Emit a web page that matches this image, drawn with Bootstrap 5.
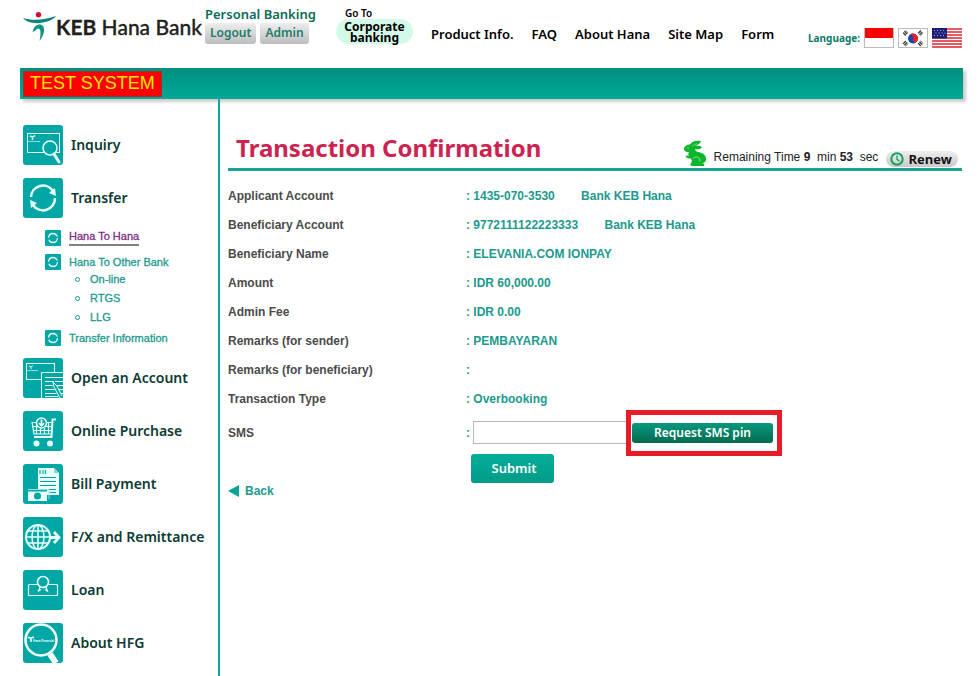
<!DOCTYPE html>
<html lang="en">
<head>
<meta charset="utf-8">
<meta name="viewport" content="width=device-width, initial-scale=1">
<title>KEB Hana Bank - Transaction Confirmation</title>
<link href="https://cdn.jsdelivr.net/npm/bootstrap@5.3.0/dist/css/bootstrap.min.css" rel="stylesheet">
<style>
:root { --teal: #00a7a5; --ink: #0b3b33; --value: #1b9a8d; --hum: "Noto Sans", "Open Sans", sans-serif; }
body { font-family: "Liberation Sans", Arial, sans-serif; font-size: 12px; line-height: 16px; color: #222; background: #fff; }
a { text-decoration: none; color: inherit; }
button { border: 0; }
.page { min-height: 100vh; padding: 0 15px 0 20px; }
.topbar { height: 68px; font-family: var(--hum); }
.brand { flex: none; color: #231f20; width: 185px; padding: 12px 0 0 3px; font-size: 21px; line-height: 30px; font-weight: 500; white-space: nowrap; font-family: Lato, "Open Sans", sans-serif; -webkit-text-stroke: .3px currentColor; }
.brand svg { flex: none; }
.personal { flex: none; width: 131px; padding-top: 5px; }
.personal-title { font-size: 13px; font-weight: 600; line-height: 18px; color: #0a6b58; white-space: nowrap; }
.grey-btn { height: 21px; padding: 0 5px 2px; font-size: 12px; line-height: 18px; font-weight: 600; color: #1c7c69; border-radius: 3px; background: linear-gradient(#eee, #bdbdbd); }
.corp { flex: none; width: 95px; padding-top: 7px; color: #000; }
.corp-go { font-size: 10px; line-height: 12px; font-weight: 600; padding-left: 9px; }
.corp-pill { width: 77px; height: 25px; border-radius: 13px; background: #d3fae9; font-size: 12px; line-height: 11px; font-weight: 700; padding-top: 2px; text-align: center; }
.mainnav { gap: 18px; padding-top: 25px; font-size: 13px; line-height: 18px; font-weight: 600; color: #000; white-space: nowrap; }
.langs { gap: 4px; padding: 28px 1px 0 0; }
.langs-label { font-size: 10px; line-height: 20px; font-weight: 700; color: #0b7a66; }
.langs svg { display: block; }
.greenbar { height: 31px; padding: 3px; background: linear-gradient(#008f7d, #00a998); box-shadow: 3px 3px 3px #ccc; }
.test-tag { height: 26px; padding: 0 6px; font-size: 18px; line-height: 22px; color: #ffe600; background: #f00; border: 1px solid #a0322a; }
.side { width: 200px; flex: none; border-right: 2px solid #0ba79d; padding: 26px 0 13px 3px; }
.menu-link { gap: 8px; height: 40px; margin-bottom: 13px; font-family: var(--hum); font-size: 14px; font-weight: 600; color: var(--ink); white-space: nowrap; }
.menu-link svg, .sub-link svg { flex: none; display: block; }
.menu-link.last-link { margin-bottom: 0; }
.submenu { color: var(--value); padding: 0 0 12px 22px; font-size: 11px; margin-top: -2px; -webkit-text-stroke: .3px currentColor; }
.sub-link { gap: 8px; height: 17px; }
.sub-link.chosen { color: #7c2d86; margin-bottom: 7px; }
.chosen span { border-bottom: 2px solid #857b8a; line-height: 15px; }
.leaves { line-height: 19px; padding-left: 30px; margin-bottom: 2px; }
.leaves li { gap: 10px; }
.dot { width: 5px; height: 5px; border: 1px solid var(--value); border-radius: 50%; }
.content { padding: 0 1px 0 8px; min-width: 0; }
.title-row { height: 72px; border-bottom: 3px solid #15a396; }
.page-title { font-family: var(--hum); font-size: 24px; line-height: 32px; font-weight: 700; color: #cd2350; margin: 0 0 4px 8px; white-space: nowrap; }
.timer { padding-bottom: 1px; white-space: nowrap; }
.timer svg { flex: none; }
.timer-text { padding: 0 8px 0 7px; line-height: 20px; }
.renew { height: 16px; margin-right: 4px; padding: 0 6px 0 4px; gap: 4px; border-radius: 8px; background: linear-gradient(#eee, #c9c9c9); font-family: "Open Sans", sans-serif; font-weight: 700; font-size: 13px; line-height: 16px; color: #111; }
.details { margin-top: 10px; font-weight: 700; color: var(--value); }
.details th, .details td { height: 29px; padding: 0; vertical-align: middle; white-space: nowrap; }
.details th { width: 238px; color: #4b4b4b; }
.details .sms-row th, .details .sms-row td { height: 39px; }
.bank { margin-left: 23px; }
.sms-input { width: 154px; height: 23px; margin-left: 3px; padding: 0 4px; border: 1px solid #b5b9bd; border-right: 0; border-radius: 0; }
.pin-frame { padding: 8px 4px 8px 1px; outline: 5px solid #e81c26; margin-left: 4px; }
.pin-btn { width: 141px; height: 20px; border-radius: 3px; background: linear-gradient(#069a7e, #04694f); color: #fff; font-family: var(--hum); font-size: 12px; line-height: 20px; font-weight: 600; padding: 0; }
.submit-btn { height: 29px; width: 83px; margin: 2px 0 0 243px; border-radius: 3px; background: linear-gradient(#05ad98, #009c88); color: #fff; font-family: var(--hum); font-size: 13px; font-weight: 600; padding: 0 0 1px 3px; }
.back-link { color: var(--value); font-weight: 700; gap: 5px; }
</style>
<script src="https://cdn.jsdelivr.net/npm/bootstrap@5.3.0/dist/js/bootstrap.bundle.min.js"></script>
</head>
<body>
<div class="page d-flex flex-column">
  <header class="topbar d-flex">
    <a href="#" class="brand d-flex">
      <svg width="33" height="30" viewBox="0 0 33 30" aria-hidden="true"><circle cx="15.500" cy="2.700" r="2.700" fill="#d0103a"/><path d="M0 6C9 9 22 8 33 4C30 8 25 9.500 20 10.500C13 12 4 11 0 6Z" fill="#0a8577"/><path d="M9.500 20C11 14 14 12 17.500 12.500C23 14 22 22 16.500 29C18 22 18 17 15.500 16.500C13.500 16.500 13 19 9.500 20Z" fill="#0a9585"/></svg>
      <span><b>KEB</b> Hana Bank</span>
    </a>
    <div class="personal">
      <div class="personal-title">Personal Banking</div>
      <div class="d-flex gap-1">
        <button type="button" class="grey-btn">Logout</button>
        <button type="button" class="grey-btn">Admin</button>
      </div>
    </div>
    <a href="#" class="corp d-block">
      <div class="corp-go">Go To</div>
      <div class="corp-pill">Corporate<br>banking</div>
    </a>
    <nav class="mainnav d-flex align-items-start" aria-label="Main">
      <a href="#">Product Info.</a><a href="#">FAQ</a><a href="#">About Hana</a><a href="#">Site Map</a><a href="#">Form</a>
    </nav>
    <div class="langs d-flex align-items-start ms-auto">
      <span class="langs-label">Language:</span>
      <a href="#" aria-label="Indonesian"><svg width="30" height="20" viewBox="0 0 30 20"><rect x=".5" y=".5" width="29" height="19" fill="#fff" stroke="#bbb"/><rect x="1" y="0" width="28" height="10" fill="#fd0000"/></svg></a>
      <a href="#" aria-label="Korean"><svg width="30" height="20" viewBox="0 0 30 20"><rect x=".5" y=".5" width="29" height="19" fill="#fff" stroke="#bbb"/><g transform="rotate(25 15 10.500)"><circle cx="15" cy="10.500" r="5" fill="#124aa8"/><path d="M10 10.500A5 5 0 0 1 20 10.500A2.500 2.500 0 0 1 15 10.500A2.500 2.500 0 0 0 10 10.500Z" fill="#f01a28"/></g><g stroke="#333" stroke-width="4" stroke-dasharray="1.300 .6"><path d="M6 6.500L9 3.500M21 17L24 14M6 14L9 17M21 3.500L24 6.500"/></g></svg></a>
      <a href="#" aria-label="English"><svg width="30" height="20" viewBox="0 0 30 20"><rect width="30" height="20" fill="#fff"/><path d="M0 1H30M0 4H30M0 7H30M0 10H30M0 13H30M0 16H30M0 19H30" stroke="#e0242f" stroke-width="1.700"/><rect width="15" height="10.500" fill="#1b1f7c"/><path d="M2 2.500H14M3.500 5H14M2 7.500H14" stroke="#aab" stroke-dasharray="1 2"/></svg></a>
    </div>
  </header>
  <div class="greenbar d-flex"><div class="test-tag">TEST SYSTEM</div></div>
  <div class="d-flex flex-grow-1">
    <aside class="side">
      <nav aria-label="Services">
        <a href="#" class="menu-link d-flex align-items-center">
          <svg width="40" height="40" viewBox="0 0 40 40" fill="none" stroke="#e9ffff"><rect width="40" height="40" rx="3" fill="#00a7a5" stroke="none"/><rect x="4.500" y="8.500" width="32" height="19"/><path d="M5 16.500H17" opacity=".6"/><path d="M7 11C9 12 11 11.500 12 10.500M9.500 12V15" stroke-width="1.500"/><circle cx="27" cy="23" r="7" fill="#00a7a5" stroke-width="1.500"/><path d="M31 29L36 37" stroke-width="3" stroke-linecap="round"/></svg>Inquiry</a>
        <a href="#" class="menu-link d-flex align-items-center">
          <svg width="40" height="40" viewBox="0 0 40 40" fill="none" stroke="#e9ffff" stroke-width="2.500"><rect width="40" height="40" rx="3" fill="#00a7a5" stroke="none"/><path d="M8 19A12 12 0 0 1 30 13M32 20A12 12 0 0 1 10 27"/><path d="M26 15L33 18L32 10ZM14 25L7 22L8 30Z" fill="#e9ffff" stroke="none"/></svg>Transfer</a>
        <div class="submenu">
          <a href="#" class="sub-link chosen d-flex align-items-center"><svg width="16" height="16" viewBox="0 0 16 16"><rect width="16" height="16" rx="1" fill="#00a7a5"/><circle cx="8" cy="8" r="4.500" fill="none" stroke="#e9ffff" stroke-width="1.300" stroke-dasharray="12 2.140"/></svg><span>Hana To Hana</span></a>
          <a href="#" class="sub-link d-flex align-items-center"><svg width="16" height="16" viewBox="0 0 16 16"><rect width="16" height="16" rx="1" fill="#00a7a5"/><circle cx="8" cy="8" r="4.500" fill="none" stroke="#e9ffff" stroke-width="1.300" stroke-dasharray="12 2.140"/></svg><span>Hana To Other Bank</span></a>
          <ul class="leaves list-unstyled">
            <li class="d-flex align-items-center"><i class="dot"></i><a href="#">On-line</a></li>
            <li class="d-flex align-items-center"><i class="dot"></i><a href="#">RTGS</a></li>
            <li class="d-flex align-items-center"><i class="dot"></i><a href="#">LLG</a></li>
          </ul>
          <a href="#" class="sub-link d-flex align-items-center"><svg width="16" height="16" viewBox="0 0 16 16"><rect width="16" height="16" rx="1" fill="#00a7a5"/><circle cx="8" cy="8" r="4.500" fill="none" stroke="#e9ffff" stroke-width="1.300" stroke-dasharray="12 2.140"/></svg><span>Transfer Information</span></a>
        </div>
        <a href="#" class="menu-link d-flex align-items-center">
          <svg width="40" height="40" viewBox="0 0 40 40" fill="none" stroke="#e9ffff"><rect width="40" height="40" rx="3" fill="#00a7a5" stroke="none"/><rect x="3.500" y="5.500" width="28" height="16"/><path d="M4 12.500H15" opacity=".6"/><path d="M6 8C8 9 9 8.500 10 7.500M8 9V11"/><path d="M18.500 40V14.500H40V40Z" fill="#00a7a5" stroke="none"/><path d="M18.500 40V14.500H40M22 19.500H40M22 23.500H40M22 27.500H40M22 31.500H40M22 35.500H40M22 38.500H36"/><path d="M30 24L38 40" stroke="#00a7a5" stroke-width="4"/><path d="M30 24L31 29L37 40M30 24L34 28L39 38"/></svg>Open an Account</a>
        <a href="#" class="menu-link d-flex align-items-center">
          <svg width="40" height="40" viewBox="0 0 40 40" fill="none" stroke="#e9ffff"><rect width="40" height="40" rx="3" fill="#00a7a5" stroke="none"/><path d="M9 11.500H28M9 11L11 23H28M10 15.500H28M11 19.500H28M13.500 11V23M17.500 17V23M21.500 17V23M25.500 11V23" stroke-width="1.200"/><path d="M33 8.500H29.500L28.500 26H11" stroke-width="2"/><circle cx="18.500" cy="12" r="5" fill="#00a7a5" stroke-width="1.500"/><path d="M18.500 8.500V14M16 12L18.500 15L21 12" stroke-width="1.700"/><circle cx="13.500" cy="32.500" r="3" fill="#e9ffff" stroke="none"/><circle cx="27" cy="32.500" r="3" fill="#e9ffff" stroke="none"/></svg>Online Purchase</a>
        <a href="#" class="menu-link d-flex align-items-center">
          <svg width="40" height="40" viewBox="0 0 40 40"><rect width="40" height="40" rx="3" fill="#00a7a5"/><path d="M15 4H31L36 9V31H15Z" fill="#e9ffff"/><path d="M31 4V9H36" fill="#8cd8d6"/><path d="M17 6V10M20 6V10M22.500 6V10M17 13.500H33M17 17.500H33M17 21.500H33M25 25.500H33M27 28.500H33" stroke="#00a7a5" stroke-width="1.200"/><path d="M4 25H24V37H4Z" fill="#00a7a5"/><path d="M5 27.500H24V37H5Z" fill="#e9ffff"/><path d="M5 25.500H26V35" fill="none" stroke="#9edfdd"/><circle cx="14.500" cy="32" r="3.500" fill="#00a7a5"/></svg>Bill Payment</a>
        <a href="#" class="menu-link d-flex align-items-center">
          <svg width="40" height="40" viewBox="0 0 40 40" fill="none" stroke="#e9ffff" stroke-width="1.500"><rect width="40" height="40" rx="3" fill="#00a7a5" stroke="none"/><circle cx="15" cy="20" r="12" stroke-width="2"/><ellipse cx="15" cy="20" rx="6" ry="12"/><path d="M15 8V32M3 20H27M5 14H25M5 26H25"/><path d="M27 20.500H35M31 15L36 20.500L31 26" stroke-width="2.800"/></svg>F/X and Remittance</a>
        <a href="#" class="menu-link d-flex align-items-center">
          <svg width="40" height="40" viewBox="0 0 40 40" fill="none" stroke="#e9ffff" stroke-width="1.200"><rect width="40" height="40" rx="3" fill="#00a7a5" stroke="none"/><rect x="5.500" y="14.500" width="29" height="11" rx="1"/><circle cx="20" cy="12" r="5.500" fill="#00a7a5" stroke-width="1.600"/><path d="M17 17L15.500 21L18 19.500M23 17L24.500 21L22 19.500"/></svg>Loan</a>
        <a href="#" class="menu-link last-link d-flex align-items-center">
          <svg width="40" height="40" viewBox="0 0 40 40" fill="none" stroke="#f3ffff"><rect width="40" height="40" rx="3" fill="#00a7a5" stroke="none"/><circle cx="18" cy="17" r="15.500" stroke-width="2.500"/><path d="M27 31L33 40" stroke-width="6"/><path d="M5 14C7 16 9 15 11 14M8 15V19" stroke-width="1.500"/><text x="10" y="19" font-family="Liberation Sans, sans-serif" font-size="3" font-weight="700" fill="#f3ffff" stroke="none">Hana Financial</text></svg>About HFG</a>
      </nav>
    </aside>
    <main class="content flex-grow-1">
      <div class="title-row d-flex align-items-end justify-content-between">
        <h1 class="page-title">Transaction Confirmation</h1>
        <div class="timer d-flex align-items-end">
          <svg width="23" height="27" viewBox="0 0 23 27" fill="#0db52c" aria-hidden="true"><path d="M17 1C12 0 8 1 6 4.500C3 4.500 0 6.500 0 9C0 11.500 3 12 5 12C4 14 4 15 5 16L2 15.500C1 17 3 18.500 7 18.500L8 21L6.500 24C6 26 8 26 10 26H20C21 24.500 20 23.500 18 23C21 23 22.500 21 22 18C21.500 14.500 18 12.500 12.500 11.500C11.500 11 11.500 10 11 9C13 10 17 9.500 18 7C16 5.500 13 5.500 11 6C14 5 16.500 3 17 1Z"/><path d="M9 18.500C12 15.500 16.500 17 16 21.500" fill="none" stroke="#a8eab4" stroke-width=".8"/><path d="M8.500 6L13 3.500" stroke="#a8eab4" stroke-width=".6"/><circle cx="4" cy="8" r=".6" fill="#fff"/></svg>
          <span class="timer-text">Remaining Time <b>9</b>&nbsp; min <b>53</b>&nbsp; sec</span>
          <button type="button" class="renew d-flex align-items-center"><svg width="14" height="14" viewBox="0 0 14 14" fill="none" stroke="#12a05c"><circle cx="7" cy="7" r="5.700" stroke-width="2"/><path d="M7 3.500V7.500L9.500 9" stroke-width="1.300"/></svg>Renew</button>
        </div>
      </div>
      <form>
        <table class="details">
          <tbody>
            <tr><th scope="row">Applicant Account</th><td>: 1435-070-3530 <span class="bank">Bank KEB Hana</span></td></tr>
            <tr><th scope="row">Beneficiary Account</th><td>: 9772111122223333 <span class="bank">Bank KEB Hana</span></td></tr>
            <tr><th scope="row">Beneficiary Name</th><td>: ELEVANIA.COM IONPAY</td></tr>
            <tr><th scope="row">Amount</th><td>: IDR 60,000.00</td></tr>
            <tr><th scope="row">Admin Fee</th><td>: IDR 0.00</td></tr>
            <tr><th scope="row">Remarks (for sender)</th><td>: PEMBAYARAN</td></tr>
            <tr><th scope="row">Remarks (for beneficiary)</th><td>:</td></tr>
            <tr><th scope="row">Transaction Type</th><td>: Overbooking</td></tr>
            <tr class="sms-row"><th scope="row"><label for="sms">SMS</label></th><td>
              <div class="d-flex align-items-center">:<input id="sms" type="text" class="sms-input"><div class="pin-frame d-flex"><button type="button" class="pin-btn">Request SMS pin</button></div></div>
            </td></tr>
          </tbody>
        </table>
        <button type="submit" class="submit-btn d-block">Submit</button>
        <a href="#" class="back-link d-inline-flex align-items-center"><svg width="12" height="12" viewBox="0 0 12 12" aria-hidden="true"><path d="M0 6L11 0V12Z" fill="#0aa39a"/></svg>Back</a>
      </form>
    </main>
  </div>
</div>
</body>
</html>
